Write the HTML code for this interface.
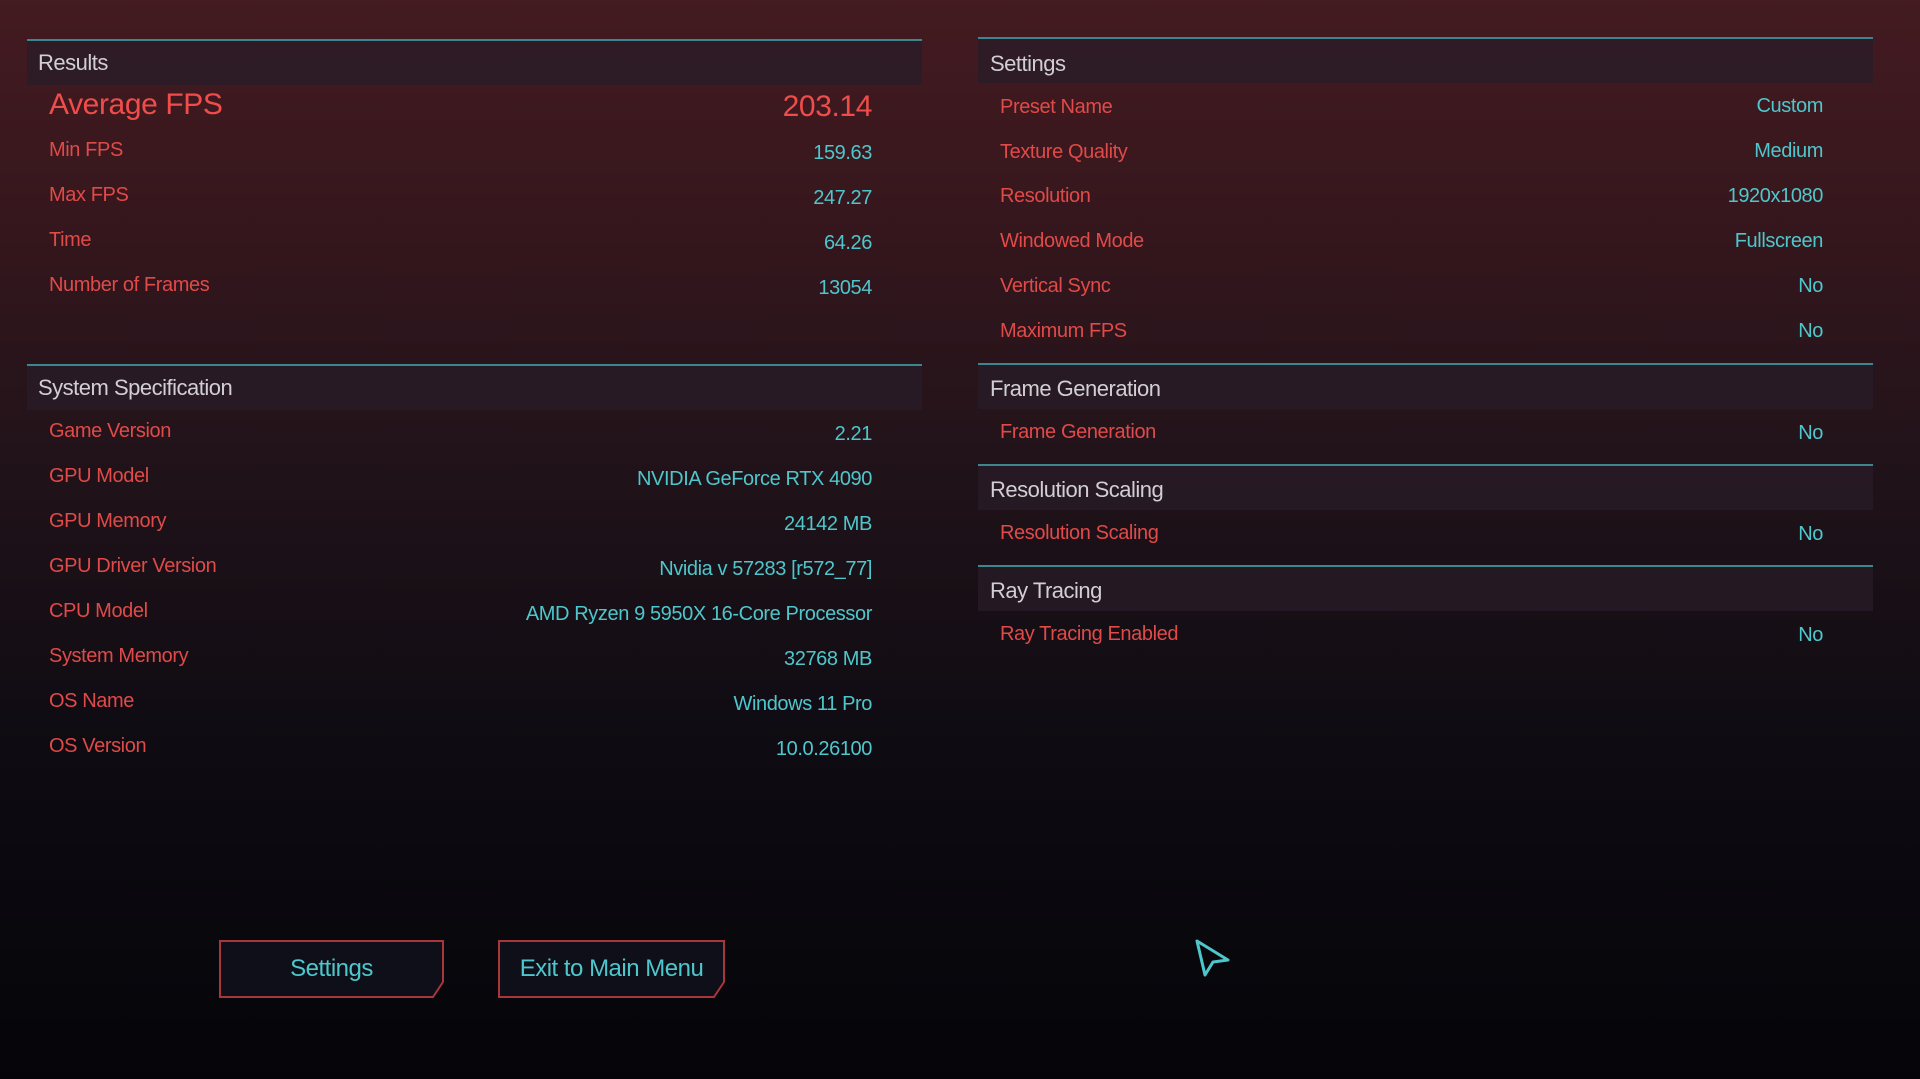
<!DOCTYPE html>
<html><head><meta charset="utf-8"><style>
*{margin:0;padding:0;box-sizing:border-box}
body{width:1920px;height:1079px;overflow:hidden;position:relative;
background:linear-gradient(180deg,#431b21 0px,#37171d 200px,#22131a 450px,#0e0b12 750px,#050509 1079px);
font-family:"Liberation Sans Narrow","Liberation Sans",sans-serif;}
.line{position:absolute;height:2px;background:#3b8790}
.hb{position:absolute;height:44px;background:rgba(40,28,40,0.75)}
.h{position:absolute;color:#d2cfd2;font-size:22px;line-height:44px;letter-spacing:-0.5px}
.l{position:absolute;color:#e04a48;font-size:20px;line-height:26px;letter-spacing:-0.4px}
.v{position:absolute;color:#4ec7cc;font-size:20px;line-height:26px;text-align:right;width:600px;letter-spacing:-0.4px}
.btn{position:absolute;color:#4ec7cc;font-size:24px;text-align:center;line-height:58px;letter-spacing:-0.5px}
.btn svg{position:absolute;left:0;top:0;z-index:-1}
</style></head><body>
<div class="line" style="left:27px;top:39px;width:895px"></div>
<div class="hb" style="left:27px;top:41px;width:895px"></div>
<div class="h" style="left:38px;top:41px">Results</div>
<div class="l" style="left:49px;top:88px;font-size:30px;line-height:34px;color:#f04c4a">Average FPS</div>
<div class="v" style="left:272px;top:90px;font-size:30px;line-height:34px;color:#f04c4a">203.14</div>
<div class="l" style="left:49px;top:137px">Min FPS</div><div class="v" style="left:272px;top:140px">159.63</div>
<div class="l" style="left:49px;top:182px">Max FPS</div><div class="v" style="left:272px;top:185px">247.27</div>
<div class="l" style="left:49px;top:227px">Time</div><div class="v" style="left:272px;top:230px">64.26</div>
<div class="l" style="left:49px;top:272px">Number of Frames</div><div class="v" style="left:272px;top:275px">13054</div>

<div class="line" style="left:27px;top:364px;width:895px"></div>
<div class="hb" style="left:27px;top:366px;width:895px"></div>
<div class="h" style="left:38px;top:366px">System Specification</div>
<div class="l" style="left:49px;top:418px">Game Version</div><div class="v" style="left:272px;top:421px">2.21</div>
<div class="l" style="left:49px;top:463px">GPU Model</div><div class="v" style="left:272px;top:466px">NVIDIA GeForce RTX 4090</div>
<div class="l" style="left:49px;top:508px">GPU Memory</div><div class="v" style="left:272px;top:511px">24142 MB</div>
<div class="l" style="left:49px;top:553px">GPU Driver Version</div><div class="v" style="left:272px;top:556px">Nvidia v 57283 [r572_77]</div>
<div class="l" style="left:49px;top:598px">CPU Model</div><div class="v" style="left:272px;top:601px">AMD Ryzen 9 5950X 16-Core Processor</div>
<div class="l" style="left:49px;top:643px">System Memory</div><div class="v" style="left:272px;top:646px">32768 MB</div>
<div class="l" style="left:49px;top:688px">OS Name</div><div class="v" style="left:272px;top:691px">Windows 11 Pro</div>
<div class="l" style="left:49px;top:733px">OS Version</div><div class="v" style="left:272px;top:736px">10.0.26100</div>

<div class="line" style="left:978px;top:37px;width:895px"></div>
<div class="hb" style="left:978px;top:39px;width:895px"></div>
<div class="h" style="left:990px;top:42px">Settings</div>
<div class="l" style="left:1000px;top:94px">Preset Name</div><div class="v" style="left:1223px;top:93px">Custom</div>
<div class="l" style="left:1000px;top:139px">Texture Quality</div><div class="v" style="left:1223px;top:138px">Medium</div>
<div class="l" style="left:1000px;top:183px">Resolution</div><div class="v" style="left:1223px;top:183px">1920x1080</div>
<div class="l" style="left:1000px;top:228px">Windowed Mode</div><div class="v" style="left:1223px;top:228px">Fullscreen</div>
<div class="l" style="left:1000px;top:273px">Vertical Sync</div><div class="v" style="left:1223px;top:273px">No</div>
<div class="l" style="left:1000px;top:318px">Maximum FPS</div><div class="v" style="left:1223px;top:318px">No</div>

<div class="line" style="left:978px;top:363px;width:895px"></div>
<div class="hb" style="left:978px;top:365px;width:895px"></div>
<div class="h" style="left:990px;top:367px">Frame Generation</div>
<div class="l" style="left:1000px;top:419px">Frame Generation</div><div class="v" style="left:1223px;top:420px">No</div>

<div class="line" style="left:978px;top:464px;width:895px"></div>
<div class="hb" style="left:978px;top:466px;width:895px"></div>
<div class="h" style="left:990px;top:468px">Resolution Scaling</div>
<div class="l" style="left:1000px;top:520px">Resolution Scaling</div><div class="v" style="left:1223px;top:521px">No</div>

<div class="line" style="left:978px;top:565px;width:895px"></div>
<div class="hb" style="left:978px;top:567px;width:895px"></div>
<div class="h" style="left:990px;top:569px">Ray Tracing</div>
<div class="l" style="left:1000px;top:621px">Ray Tracing Enabled</div><div class="v" style="left:1223px;top:622px">No</div>

<div class="btn" style="left:219px;top:940px;width:225px;height:58px">
<svg width="225" height="58"><path d="M1 1 H224 V42 L214 57 H1 Z" fill="#0e0f18" stroke="#a8363a" stroke-width="2"/></svg>Settings</div>
<div class="btn" style="left:498px;top:940px;width:227px;height:58px">
<svg width="227" height="58"><path d="M1 1 H226 V42 L216 57 H1 Z" fill="#0e0f18" stroke="#a8363a" stroke-width="2"/></svg>Exit to Main Menu</div>

<svg style="position:absolute;left:1190px;top:936px" width="44" height="44" viewBox="0 0 44 44">
<path d="M7 5 L38 24 L23 26 L15 39 Z" fill="none" stroke="#4ec7cc" stroke-width="3" stroke-linejoin="round"/>
</svg>
</body></html>
